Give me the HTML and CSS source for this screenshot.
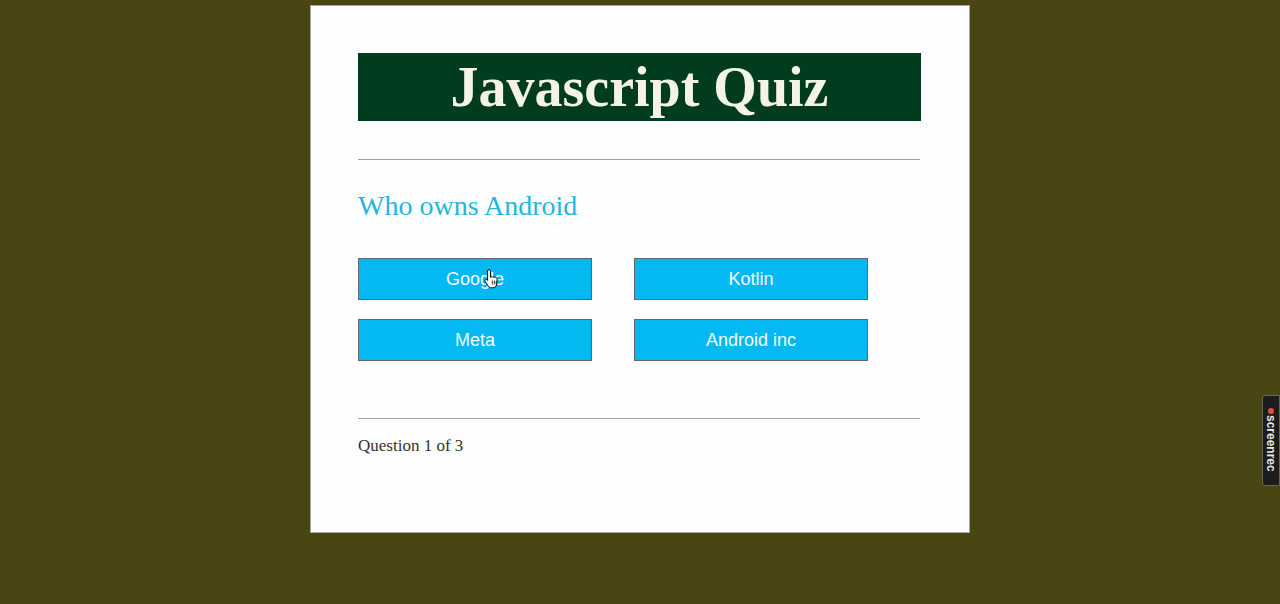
FILE: index.html
```html
<!DOCTYPE html>
<html>
<head>
<meta charset="utf-8">
<link rel="stylesheet" href="styles.css">
</head>
<body>
<main class="quiz">
  <h1 class="title">Javascript Quiz</h1>
  <hr class="rule">
  <h2 class="question">Who owns Android</h2>
  <div class="choices">
    <button class="choice">Google</button>
    <button class="choice">Kotlin</button>
    <button class="choice">Meta</button>
    <button class="choice">Android inc</button>
  </div>
  <hr class="rule rule-bottom">
  <p class="progress">Question 1 of 3</p>
</main>
<svg class="cursor" width="16" height="22" viewBox="0 0 16 22">
  <path d="M5 1.5c.8 0 1.4.6 1.4 1.4v6.3l.2-.1c.6-.5 1.6-.4 2.1.2.5-.5 1.5-.5 2 .1.6-.4 1.5-.2 1.9.4l.4.7V15c0 2.6-1.8 4.8-4.3 4.8H7.5c-1.3 0-2.4-.6-3.2-1.6L1.2 13.6c-.5-.7-.3-1.5.3-1.9.6-.4 1.4-.2 1.8.3l.3.4V2.9c0-.8.6-1.4 1.4-1.4z" fill="#fff" stroke="#000" stroke-width="1"/>
  <path d="M8.3 12.5v4M10.3 12.5v4M12.2 13v3.5" stroke="#000" stroke-width="0.8"/>
</svg>
<div class="rec">
  <span class="rec-dot"></span>
  <span class="rec-text">screenrec</span>
</div>
</body>
</html>
```
FILE: styles.css
```css
html, body {
  margin: 0;
  padding: 0;
}
body {
  background: #4a4614;
  height: 604px;
  overflow: hidden;
  position: relative;
  font-family: "Liberation Serif", "Times New Roman", serif;
}
.quiz {
  box-sizing: border-box;
  width: 660px;
  height: 528px;
  margin: 5px auto 0;
  background: #fefefe;
  border: 1px solid #a8a8a0;
  padding: 47px 47px 0;
  display: flex;
  flex-direction: column;
}
.title {
  margin: 0;
  height: 68px;
  background: #023c1e;
  color: #f4f4e6;
  font-size: 56px;
  font-weight: bold;
  line-height: 68px;
  text-align: center;
  width: 563px;
}
.rule {
  margin: 38px 0 0;
  border: 0;
  border-top: 1px solid #a0a090;
  height: 0;
  width: 562px;
}
.question {
  margin: 28px 0 0;
  color: #22b6e0;
  font-weight: normal;
  font-size: 28px;
  line-height: 36px;
  height: 36px;
}
.choices {
  margin-top: 34px;
  display: grid;
  grid-template-columns: 234px 234px;
  column-gap: 42px;
  row-gap: 19px;
}
.choice {
  box-sizing: border-box;
  height: 42px;
  background: #04b8f2;
  border: 1px solid #5a6a70;
  color: #f4fbff;
  font-family: "Liberation Sans", Arial, sans-serif;
  font-size: 18px;
  padding: 0;
}
.rule-bottom {
  margin-top: 57px;
}
.progress {
  margin: 17px 0 0;
  color: #33331f;
  font-size: 17px;
  line-height: 20px;
}
.cursor {
  position: absolute;
  left: 484px;
  top: 268px;
}
.rec {
  position: absolute;
  left: 1262px;
  top: 395px;
  width: 18px;
  height: 91px;
  box-sizing: border-box;
  background: #1c1c1a;
  border: 1px solid #66665a;
  border-radius: 3px 0 0 3px;
  display: flex;
  flex-direction: column;
  align-items: center;
}
.rec-dot {
  width: 6px;
  height: 6px;
  border-radius: 50%;
  background: #e0503a;
  margin-top: 12px;
}
.rec-text {
  writing-mode: vertical-rl;
  color: #e8e8e8;
  font-family: "Liberation Sans", Arial, sans-serif;
  font-size: 12px;
  font-weight: bold;
  margin-top: 1px;
}
```
